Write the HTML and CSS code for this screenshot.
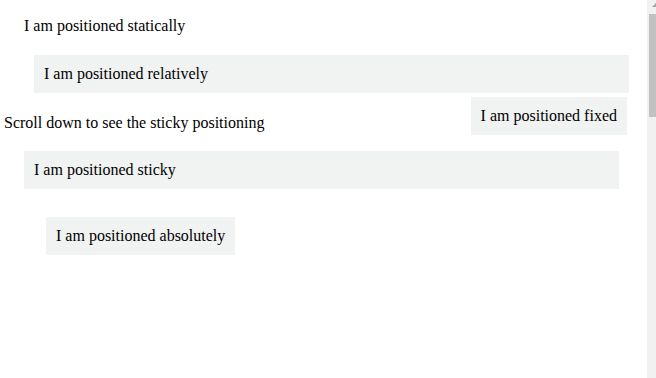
FILE: index.html
```html
<!DOCTYPE html>
<html>
<head>
<meta charset="utf-8">
<link rel="stylesheet" href="styles.css">
</head>
<body>
<div class="page">
  <main class="content">
    <div class="box static">I am positioned statically</div>
    <div class="box shaded relative">I am positioned relatively</div>
    <p class="hint">Scroll down to see the sticky positioning</p>
    <div class="box shaded sticky">I am positioned sticky</div>
    <div class="box shaded absolute">I am positioned absolutely</div>
    <div class="box shaded fixed">I am positioned fixed</div>
  </main>
  <div class="scrollbar">
    <div class="arrow"></div>
    <div class="thumb"></div>
  </div>
</div>
</body>
</html>
```
FILE: styles.css
```css
html, body {
  margin: 0;
  padding: 0;
  height: 100%;
  overflow: hidden;
  background: #ffffff;
}
.page {
  display: flex;
  width: 656px;
  height: 378px;
}
.content {
  position: relative;
  flex: 0 0 647px;
  display: flex;
  flex-direction: column;
  align-items: flex-start;
  font-family: "Liberation Serif", "Times New Roman", serif;
  font-size: 16px;
  line-height: 18px;
  color: #000;
}
.box {
  box-sizing: border-box;
  padding: 10px;
}
.shaded {
  background: #f1f2f2;
}
.static {
  margin: 7px 0 0 14px;
}
.relative {
  margin: 10px 0 0 34px;
  width: 595px;
}
.hint {
  margin: 21px 0 0 4px;
}
.sticky {
  margin: 19px 0 0 24px;
  width: 595px;
}
.absolute {
  margin: 28px 0 0 46px;
}
.fixed {
  position: absolute;
  top: 97px;
  right: 20px;
}
.scrollbar {
  flex: 0 0 9px;
  background: #f1f1f1;
  display: flex;
  flex-direction: column;
  align-items: flex-end;
}
.arrow {
  width: 0;
  height: 0;
  margin: 3px 0 0 0;
  border-left: 4px solid transparent;
  border-bottom: 4px solid #a3a3a3;
}
.thumb {
  margin-top: 7px;
  width: 7px;
  height: 103px;
  background: #c1c1c1;
}
```
